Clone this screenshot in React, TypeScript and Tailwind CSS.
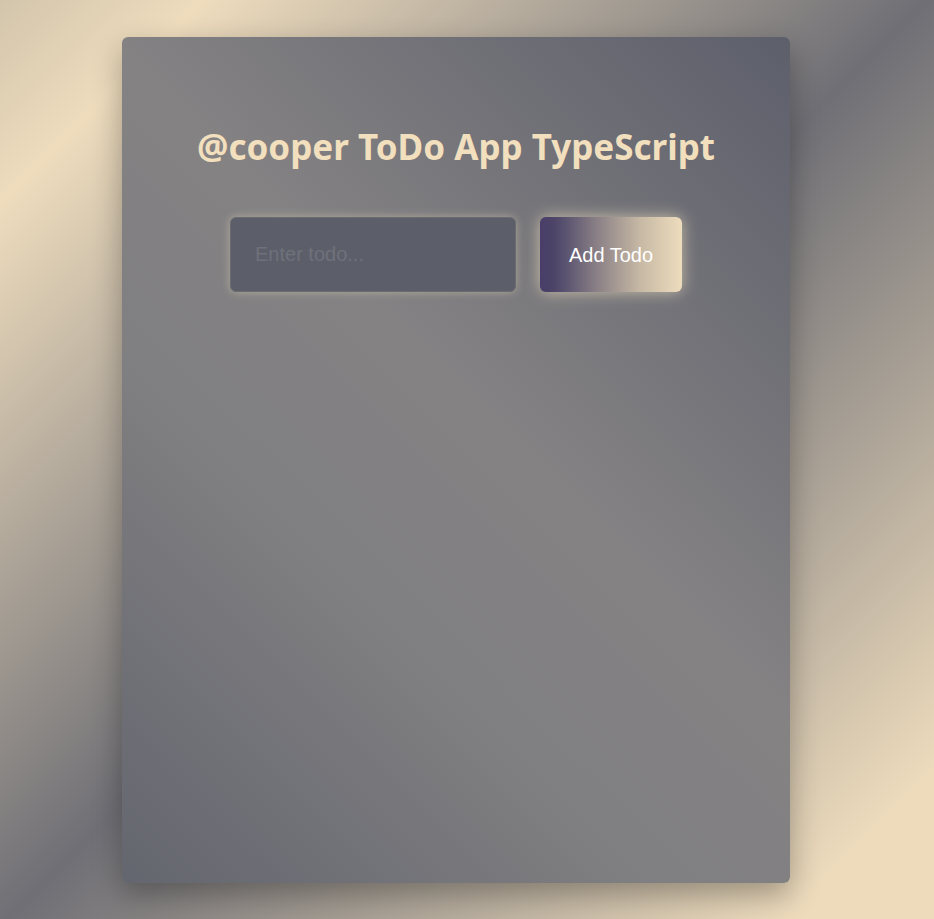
import { useState } from "react";

const App = () => {
  const [todo, setTodo] = useState("");

  return (
    <div className="min-h-screen w-full bg-[linear-gradient(135deg,#d3c5ac_0%,#eedcbd_11%,#6f6f75_50%,#eddbbc_92%)] flex justify-center pt-[37px] pb-[36px] pr-[22px] font-['Liberation_Sans',Arial,sans-serif]">
      <div className="w-[668px] h-[846px] rounded-md bg-[linear-gradient(45deg,#64666f_0%,#807f81_35%,#848283_55%,#5d5f6b_100%)] shadow-[0_12px_30px_rgba(0,0,0,0.3)] flex flex-col items-center pt-[87px]">
        <h1 className="text-[35px] leading-[46px] font-bold text-[#f1dfbd] font-['Noto_Sans','Open_Sans',sans-serif]">
          @cooper ToDo App TypeScript
        </h1>
        <div className="flex gap-6 mt-[47px]">
          <input
            value={todo}
            onChange={(e) => setTodo(e.target.value)}
            placeholder="Enter todo..."
            className="w-[286px] h-[75px] rounded-md bg-[#5c5f69] border border-[#6a6b70] px-6 text-[20px] text-white placeholder:text-[#6f717a] outline-none shadow-[0_0_10px_rgba(240,224,192,0.45)]"
          />
          <button className="w-[142px] h-[75px] rounded-md text-[20px] text-white bg-[linear-gradient(to_right,#483e69_0%,#4d4468_10%,#5a5370_18%,#8a8086_40%,#c6b8a4_70%,#eddcbd_100%)] shadow-[0_0_16px_rgba(240,224,192,0.7)]">
            Add Todo
          </button>
        </div>
      </div>
    </div>
  );
};

export default App;
